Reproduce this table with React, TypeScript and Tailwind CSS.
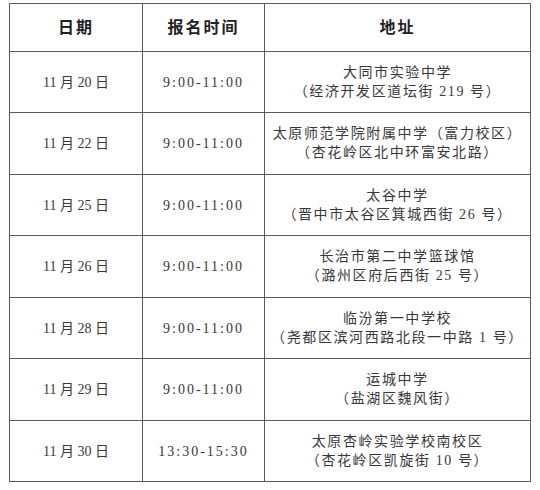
const rows = [
  { date: '11 月 20 日', time: '9:00-11:00', addr: ['大同市实验中学', '（经济开发区道坛街 219 号）'] },
  { date: '11 月 22 日', time: '9:00-11:00', addr: ['太原师范学院附属中学（富力校区）', '（杏花岭区北中环富安北路）'] },
  { date: '11 月 25 日', time: '9:00-11:00', addr: ['太谷中学', '（晋中市太谷区箕城西街 26 号）'] },
  { date: '11 月 26 日', time: '9:00-11:00', addr: ['长治市第二中学篮球馆', '（潞州区府后西街 25 号）'] },
  { date: '11 月 28 日', time: '9:00-11:00', addr: ['临汾第一中学校', '（尧都区滨河西路北段一中路 1 号）'] },
  { date: '11 月 29 日', time: '9:00-11:00', addr: ['运城中学', '（盐湖区魏风街）'] },
  { date: '11 月 30 日', time: '13:30-15:30', addr: ['太原杏岭实验学校南校区', '（杏花岭区凯旋街 10 号）'] },
];

const rowHeights = ['h-[61px]', 'h-[62px]', 'h-[61px]', 'h-[62px]', 'h-[61px]', 'h-[62px]', 'h-[61px]'];

export default function App() {
  return (
    <main className="w-[540px] h-[490px] bg-white pt-[3px] pl-[9px] text-[#383838] [font-family:'Liberation_Serif','Noto_Sans_CJK_SC',serif]">
      <table className="border-collapse table-fixed w-[521px]">
        <colgroup>
          <col className="w-[133px]" />
          <col className="w-[122px]" />
          <col className="w-[266px]" />
        </colgroup>
        <thead>
          <tr className="h-[48px]">
            <th className="border border-[#5a5a5a] text-[16px] font-bold tracking-[2px] text-center text-[#222]">日期</th>
            <th className="border border-[#5a5a5a] text-[16px] font-bold tracking-[2px] text-center text-[#222]">报名时间</th>
            <th className="border border-[#5a5a5a] text-[16px] font-bold tracking-[2px] text-center text-[#222]">地址</th>
          </tr>
        </thead>
        <tbody>
          {rows.map((r, i) => (
            <tr key={r.date} className={rowHeights[i]}>
              <td className="border border-[#5a5a5a] text-[14px] text-center">{r.date}</td>
              <td className="border border-[#5a5a5a] text-[14px] tracking-[2px] text-center">{r.time}</td>
              <td className="border border-[#5a5a5a] text-[14px] tracking-[1.6px] text-center leading-[19px] pb-[1px]">
                <div>{r.addr[0]}</div>
                <div>{r.addr[1]}</div>
              </td>
            </tr>
          ))}
        </tbody>
      </table>
    </main>
  );
}
